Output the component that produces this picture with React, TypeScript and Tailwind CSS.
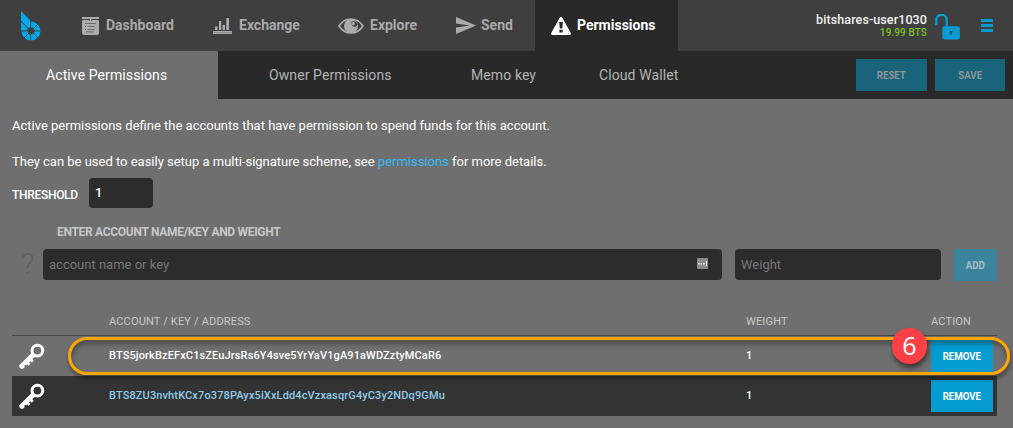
import React from "react";

function Logo() {
  return (
    <svg className="block h-[30px] w-[20px]" viewBox="0 0 20 30" fill="#00a9ea">
      <circle cx="10" cy="20" r="6.500" fill="none" stroke="#00a9ea" strokeWidth="6" />
      <rect width="9.400" height="19.600" fill="#3f3f3f" />
      <path d="M0 0 9.200 9.500V16.200L7.400 17 0 9.800Z" />
      <path d="M0 10.900 6.800 17.600 6 19.400H0Z" />
      <path d="M9.700 9v22M0 20h20M3 27l5-5M12 18l5-5M12 22l5 5" fill="none" stroke="#3f3f3f" strokeWidth=".9" />
    </svg>
  );
}

function DashboardIcon() {
  return (
    <svg className="block h-[18px] w-[17px]" viewBox="0 0 17 18" fill="#ababab">
      <rect width="17" height="2" />
      <rect x="8" y="1" width="1.2" height="3" />
      <path d="M1 3h6.5v1h2V3H16a1 1 0 0 1 1 1v12a2 2 0 0 1-2 2H2a2 2 0 0 1-2-2V4a1 1 0 0 1 1-1Z" />
      <path
        d="M3 6.500h11M3 9.500h1M5.500 9.500h7.500M3 12.500h1M5.500 12.500h7.500M4 14.900h8"
        stroke="#6c6c6c"
        strokeWidth="1"
        fill="none"
      />
    </svg>
  );
}

function ExchangeIcon() {
  return (
    <svg className="block h-[17px] w-[19px]" viewBox="0 0 19 17" fill="#ababab">
      <path d="M2 9.500h2.500V13H2zM6 4h2.200v9H6zM9.500 8H12v5H9.500zM13.300 1H16v12h-2.700zM0 14h19v1.200H0zM0 15.600h19V17H0z" />
    </svg>
  );
}

function ExploreIcon() {
  return (
    <svg className="block h-[16px] w-[26px]" viewBox="0 0 26 16">
      <path
        d="M1 8C4 3.300 8 1 13 1s9 2.300 12 7c-3 4.700-7 7-12 7S4 12.700 1 8Z"
        fill="none"
        stroke="#ababab"
        strokeWidth="1.700"
      />
      <circle cx="13" cy="8" r="7" fill="#ababab" />
      <path d="M13.500 3.800a4.200 4.200 0 0 1 6 2.400c0 1.500-1.500 2.600-3 2.600-2 0-3.500-2-3-5Z" fill="#3f3f3f" />
      <circle cx="15.200" cy="5.800" r="1.700" fill="#ababab" />
    </svg>
  );
}

function SendIcon() {
  return (
    <svg className="block h-[17px] w-[20px]" viewBox="0 0 20 17" fill="#ababab">
      <path d="M0 0 20 8.500 0 17V10.500L14 8.500 0 6.500Z" />
    </svg>
  );
}

function WarningIcon() {
  return (
    <svg className="block h-[18px] w-[20px]" viewBox="0 0 20 18">
      <path
        d="M8.500.9a1.700 1.700 0 0 1 3 0L19.800 16a1.300 1.300 0 0 1-1.200 2H1.400A1.300 1.300 0 0 1 .2 16Z"
        fill="#fff"
      />
      <path d="M8.300 5h3.500v1.500l-.6 5H8.900l-.6-5ZM8.400 12.800h3.300v2.700H8.400Z" fill="#292929" />
    </svg>
  );
}

function UnlockIcon() {
  return (
    <svg className="block h-[26px] w-[25px]" viewBox="0 0 25 26">
      <path d="M1.300 11V6a5.200 5.200 0 0 1 10.400 0V13" fill="none" stroke="#049cd1" strokeWidth="2.400" />
      <rect x="7.300" y="12.300" width="17.500" height="13.200" rx="2" fill="#049cd1" />
      <path d="M14.700 17h2.800v1.500h-.7V21h-1.300v-2.500h-.8Z" fill="#1b4658" />
    </svg>
  );
}

function KeyIcon() {
  return (
    <svg className="block h-[26px] w-[26px]" viewBox="0 0 26 26">
      <circle cx="18.400" cy="7.600" r="5.400" fill="none" stroke="#fff" strokeWidth="3" />
      <path
        d="M13 9.500 16.500 13 13.300 16.200 14.800 17.700 12.800 19.700 11.300 18.300 10 19.600 11.300 21 9.600 22.700 8.200 21.300 7.300 22.200 5.600 22 5.500 24.600 3.500 26 1 25.200 0 22.500Z"
        fill="#fff"
      />
    </svg>
  );
}

function AutofillIcon() {
  return (
    <svg className="block h-[11px] w-[11px]" viewBox="0 0 11 11">
      <rect width="11" height="11" rx="1" fill="#8b8b8b" />
      <path d="M1 5h1.500v1.500H1zM3.500 5H5v1.500H3.500zM6 5h1.500v1.500H6zM9 3h1v5H9z" fill="#fff" />
    </svg>
  );
}

function NavItem({
  icon,
  label,
  className,
}: {
  icon: React.ReactNode;
  label: string;
  className: string;
}) {
  return (
    <a className={`flex h-full shrink-0 items-center text-[14px] font-bold ${className}`}>
      {icon}
      <span className="whitespace-nowrap">{label}</span>
    </a>
  );
}

function Button({ label, className }: { label: string; className: string }) {
  return (
    <button className={`flex h-8 shrink-0 items-center justify-center text-[11.5px] font-bold ${className}`}>
      <span className="mt-0.5 inline-block scale-x-[.84]">{label}</span>
    </button>
  );
}

const keys = [
  {
    id: "BTS5jorkBzEFxC1sZEuJrsRs6Y4sve5YrYaV1gA91aWDZztyMCaR6",
    row: "",
    text: "text-white",
  },
  {
    id: "BTS8ZU3nvhtKCx7o378PAyx5iXxLdd4cVzxasqrG4yC3y2NDq9GMu",
    row: "bg-[#333]",
    text: "text-[#8fcdea]",
  },
];

export default function App() {
  return (
    <div className="relative h-[428px] w-[1013px] overflow-hidden bg-[#6f6f6f] font-['Roboto',sans-serif] text-white">
      <header className="flex h-[51px] bg-[#3f3f3f] text-[#a9a9a9]">
        <div className="w-[66px] shrink-0 pl-[21px] pt-[11px]">
          <Logo />
        </div>
        <NavItem className="w-[131px] gap-[7px] pl-4" icon={<DashboardIcon />} label="Dashboard" />
        <NavItem className="w-[125px] gap-[7px] pl-4" icon={<ExchangeIcon />} label="Exchange" />
        <NavItem className="w-[118px] gap-1.5 pl-4" icon={<ExploreIcon />} label="Explore" />
        <NavItem className="w-[95px] gap-[5px] pl-4" icon={<SendIcon />} label="Send" />
        <NavItem
          className="w-[143px] gap-1.5 bg-[#292929] pl-4 text-white"
          icon={<WarningIcon />}
          label="Permissions"
        />
        <div className="flex flex-1 items-start justify-end">
          <div className="mt-[12px] text-right">
            <div className="text-[12.5px] font-medium leading-[15px] tracking-[0.1px] text-[#f2f2f2]">
              bitshares-user1030
            </div>
            <div className="text-[10px] font-medium leading-[11px] tracking-[0.1px] text-[#7cc21e]">19.99 BTS</div>
          </div>
          <div className="ml-2 mt-[14px]">
            <UnlockIcon />
          </div>
          <div className="ml-[21px] mr-5 mt-[19px] flex w-3 flex-col gap-[2px]">
            <i className="h-[3px] bg-[#049cd1]" />
            <i className="h-[3px] bg-[#049cd1]" />
            <i className="h-[3px] bg-[#049cd1]" />
          </div>
        </div>
      </header>

      <nav className="flex h-12 items-center bg-[#292929] text-[14px] tracking-[0.1px] text-[#b3b3b3]">
        <a className="flex h-full w-[218px] items-center bg-[#6f6f6f] pl-[46px] text-white">Active Permissions</a>
        <a className="w-[202px] pl-[51px]">Owner Permissions</a>
        <a className="w-[128px] pl-[51px]">Memo key</a>
        <a className="flex-1 pl-[51px]">Cloud Wallet</a>
        <div className="mr-2 flex gap-2 tracking-normal">
          <Button label="RESET" className="w-[71px] bg-[#19637b] text-[#8e9799]" />
          <Button label="SAVE" className="w-[70px] bg-[#19637b] text-[#8e9799]" />
        </div>
      </nav>

      <main className="px-3">
        <p className="pt-[17px] text-[13px] leading-[20px]">
          Active permissions define the accounts that have permission to spend funds for this account.
        </p>
        <p className="pt-4 text-[13px] leading-[20px] tracking-[-0.01px]">
          They can be used to easily setup a multi-signature scheme, see{" "}
          <a className="text-[#33bdf4]">permissions</a> for more details.
        </p>
        <div className="mt-1.5 flex h-[30px] items-center">
          <label className="w-[77px] pt-1 text-[12px] font-medium tracking-[-0.3px]">THRESHOLD</label>
          <input
            className="h-[30px] w-16 rounded-[4px] bg-[#2c2c2c] px-[6px] pb-px text-[13px] font-medium text-white outline-none"
            defaultValue="1"
          />
        </div>

        <h2 className="ml-[45px] mt-[15px] h-[26px] text-[12px] font-bold leading-[18px] tracking-[-0.3px] text-[#c8c8c8]">
          ENTER ACCOUNT NAME/KEY AND WEIGHT
        </h2>
        <div className="flex h-8 items-start">
          <span className="w-[31px] pl-[9px] text-[30px] font-light leading-[29px] text-[#616161]">?</span>
          <div className="flex h-[31px] w-[679px] items-center rounded-[4px] bg-[#2c2c2c] pl-[6px] pr-[14px]">
            <input
              className="min-w-0 flex-1 bg-transparent text-[13px] outline-none placeholder:text-[#777]"
              placeholder="account name or key"
            />
            <div className="-mt-[3px]">
              <AutofillIcon />
            </div>
          </div>
          <input
            className="ml-[13px] h-[31px] w-[206px] rounded-[4px] bg-[#2c2c2c] px-[6px] text-[13px] outline-none placeholder:text-[#777]"
            placeholder="Weight"
          />
          <Button label="ADD" className="ml-[13px] w-[43px] bg-[#3a849d] text-[#a9bcc2]" />
        </div>

        <section className="mt-[28px] w-[985px]">
          <div className="flex h-[27px] border-b border-[#484848] text-[11px] leading-[25px] tracking-[0.17px] text-[#c8c8c8]">
            <span className="w-[734px] pl-[97px]">ACCOUNT / KEY / ADDRESS</span>
            <span className="w-[185px]">WEIGHT</span>
            <span>ACTION</span>
          </div>
          {keys.map((key) => (
            <div key={key.id} className={`flex h-10 items-center text-[11px] font-medium ${key.row}`}>
              <div className="w-[97px] pl-[7px]">
                <KeyIcon />
              </div>
              <span className={`w-[637px] pt-px tracking-[0.125px] ${key.text}`}>{key.id}</span>
              <span className="w-[185px]">1</span>
              <Button label="REMOVE" className="w-[62px] bg-[#049cd1] text-white" />
            </div>
          ))}
        </section>
      </main>

      <div className="absolute left-[68px] top-[337px] h-[38px] w-[942px] rounded-[19px] border-[3px] border-[#ffa600] shadow-[1px_4px_5px_rgba(0,0,0,0.35),inset_1px_4px_5px_rgba(0,0,0,0.3)]" />
      <div className="absolute left-[892px] top-[328px] flex h-9 w-[35px] items-center justify-center rounded-full bg-[#fc4146] font-['Open_Sans',sans-serif] text-[25px] shadow-[1px_4px_5px_rgba(0,0,0,0.5)]">
        6
      </div>
    </div>
  );
}
